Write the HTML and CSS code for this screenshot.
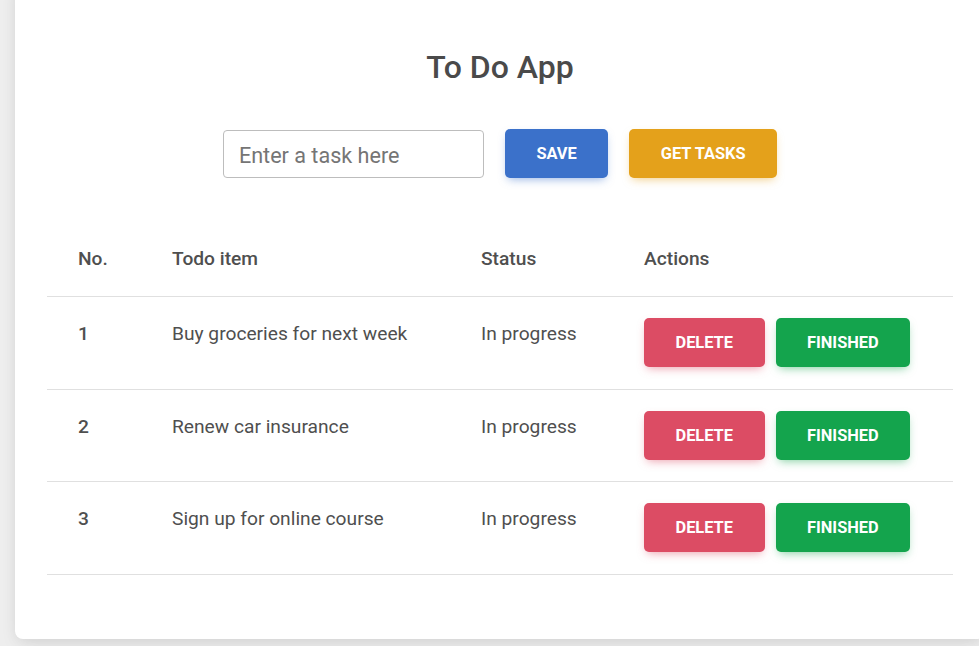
FILE: index.html
```html
<!DOCTYPE html>
<html lang="en">
<head>
<meta charset="utf-8">
<title>To Do App</title>
<link rel="stylesheet" href="styles.css">
</head>
<body>
<div class="card">
  <h1 class="title">To Do App</h1>
  <form class="task-form">
    <input class="task-input" type="text" placeholder="Enter a task here">
    <button type="button" class="btn btn-primary">Save</button>
    <button type="button" class="btn btn-warning">Get tasks</button>
  </form>
  <div class="table">
    <div class="row head">
      <div class="cell">No.</div>
      <div class="cell">Todo item</div>
      <div class="cell">Status</div>
      <div class="cell">Actions</div>
    </div>
    <div class="row">
      <div class="cell num">1</div>
      <div class="cell">Buy groceries for next week</div>
      <div class="cell">In progress</div>
      <div class="cell actions"><button type="button" class="btn btn-danger">Delete</button><button type="button" class="btn btn-success">Finished</button></div>
    </div>
    <div class="row">
      <div class="cell num">2</div>
      <div class="cell">Renew car insurance</div>
      <div class="cell">In progress</div>
      <div class="cell actions"><button type="button" class="btn btn-danger">Delete</button><button type="button" class="btn btn-success">Finished</button></div>
    </div>
    <div class="row">
      <div class="cell num">3</div>
      <div class="cell">Sign up for online course</div>
      <div class="cell">In progress</div>
      <div class="cell actions"><button type="button" class="btn btn-danger">Delete</button><button type="button" class="btn btn-success">Finished</button></div>
    </div>
  </div>
</div>
</body>
</html>
```
FILE: styles.css
```css
html, body {
  margin: 0;
  padding: 0;
}
body {
  background: #eeeeee;
  font-family: Roboto, "Liberation Sans", Arial, sans-serif;
  color: #4f4f4f;
  overflow: hidden;
  height: 646px;
}
.card {
  box-sizing: border-box;
  width: 970px;
  margin: -24px 0 0 15px;
  padding: 72px 32px 64px;
  background: #ffffff;
  border-radius: 8px;
  box-shadow: 0 2px 15px -3px rgba(0,0,0,0.10), 0 10px 20px -2px rgba(0,0,0,0.05);
}
.title {
  margin: 0;
  text-align: center;
  font-size: 32px;
  line-height: 38px;
  font-weight: 500;
  color: #4a4a4a;
}
.task-form {
  margin-top: 43px;
  display: flex;
  justify-content: center;
  align-items: center;
  gap: 21px;
}
.task-input {
  box-sizing: border-box;
  width: 261px;
  height: 48px;
  border: 1px solid #bdbdbd;
  border-radius: 4px;
  padding: 3px 15px 0;
  font-family: inherit;
  font-size: 21.6px;
  color: #4f4f4f;
  outline: none;
}
.task-input::placeholder {
  color: #757575;
}
.btn {
  box-sizing: border-box;
  height: 49px;
  padding: 0 31.5px;
  border: 0;
  border-radius: 5px;
  font-family: inherit;
  font-size: 16.4px;
  font-weight: 700;
  text-transform: uppercase;
  color: #ffffff;
  cursor: pointer;
}
.btn-primary {
  background: #3b71ca;
  box-shadow: 0 4px 10px -3px rgba(59,113,202,0.55);
}
.btn-warning {
  background: #e4a11b;
  box-shadow: 0 4px 10px -3px rgba(228,161,27,0.55);
}
.btn-danger {
  background: #dc4c64;
  box-shadow: 0 4px 10px -3px rgba(220,76,100,0.55);
}
.btn-success {
  background: #14a44d;
  box-shadow: 0 4px 10px -3px rgba(20,164,77,0.55);
}
.table {
  margin-top: 43px;
  width: 906px;
}
.row {
  display: grid;
  grid-template-columns: 94px 309px 163px 1fr;
  border-bottom: 1px solid #e0e0e0;
  font-size: 19.2px;
  line-height: 28px;
}
.cell {
  padding: 23px 0 0 31px;
}
.head .cell {
  padding: 24px 0 23px 31px;
  font-weight: 500;
}
.num {
  font-weight: 500;
}
.actions {
  padding: 21px 0 21.67px 31px;
  display: flex;
  gap: 11px;
}
```
